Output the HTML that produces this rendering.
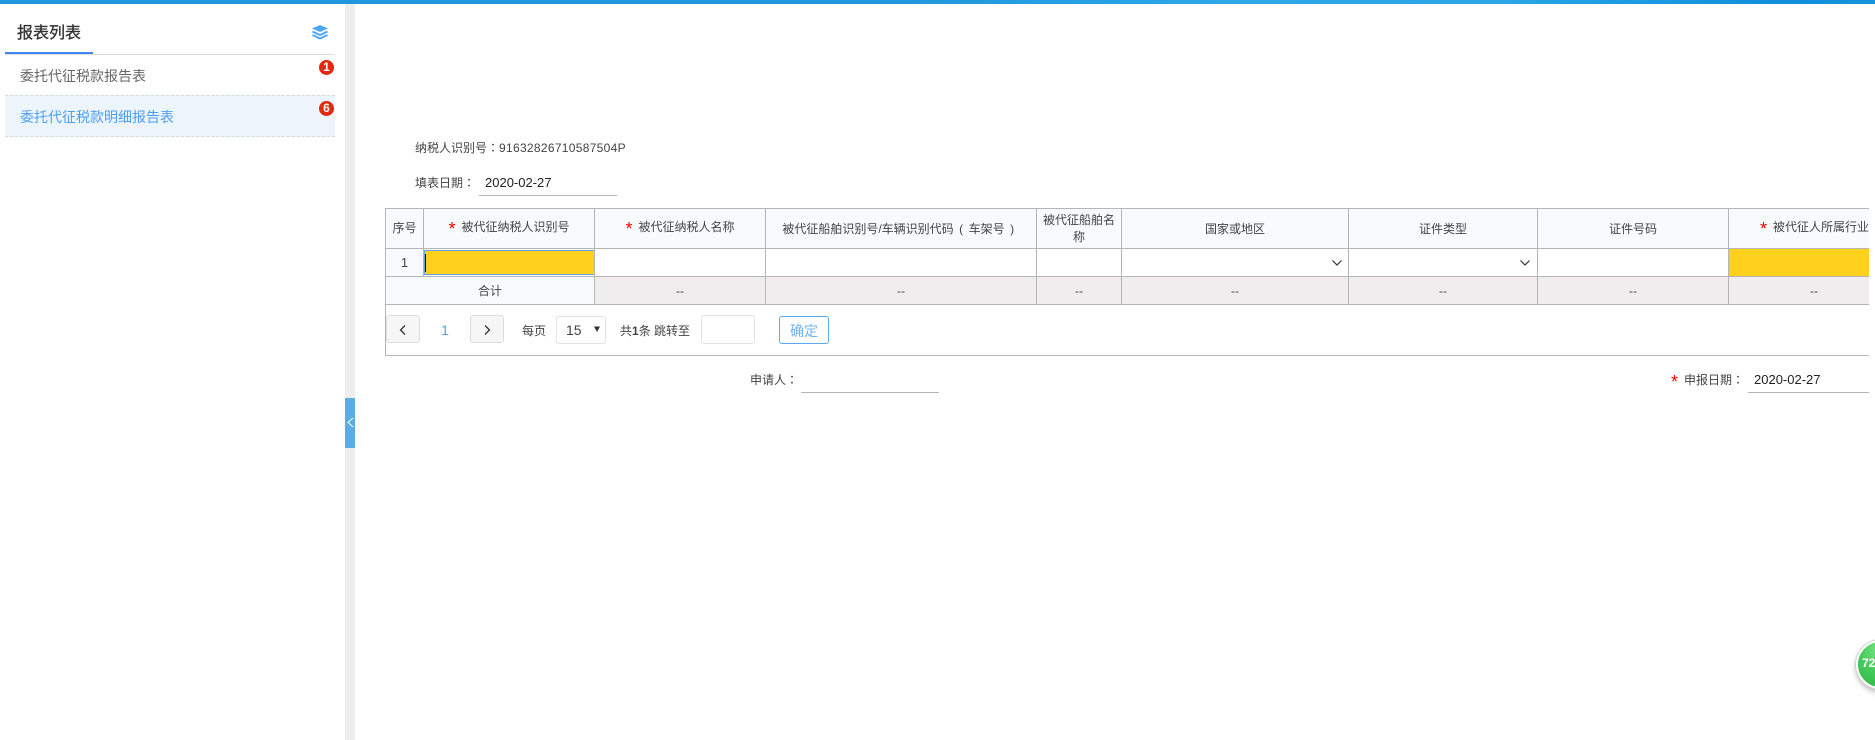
<!DOCTYPE html>
<html><head><meta charset="utf-8"><style>
html,body{margin:0;padding:0;background:#fff}
body{width:1875px;height:740px;overflow:hidden;position:relative;font-family:"Liberation Sans","Noto Sans CJK SC",sans-serif;font-size:12px;color:#444}
.a{position:absolute;white-space:nowrap}
.c{position:absolute;text-align:center;white-space:nowrap}
.l{position:absolute;background:#b5b5b5}
.s{color:#f00;font-size:18px;line-height:0;margin-right:6px;position:relative;top:4px}
.t{font-family:"Liberation Sans","Noto Sans CJK TC",sans-serif}
.p{display:inline-block;width:15px;text-align:center}
</style></head><body>
<div class="a" style="left:0;top:0;width:1875px;height:4px;background:linear-gradient(90deg,#2196de 0,#2196de 48%,#2aa8e8 65%,#28a6e8 80%,#0f8fdc 95%,#1493de 100%)"></div>

<div class="a" style="left:17px;top:23px;font-size:16px;line-height:22px;color:#333;-webkit-text-stroke:.35px #333">报表列表</div>
<svg class="a" style="left:311px;top:24px" width="18" height="17" viewBox="0 0 18 17"><path d="M9 1L17 4.5L9 8L1 4.5Z" fill="#4fa6f6"/><path d="M1.5 7.5L9 11L16.5 7.5" fill="none" stroke="#4fa6f6" stroke-width="2"/><path d="M1.5 11L9 14.5L16.5 11" fill="none" stroke="#4fa6f6" stroke-width="2"/></svg>
<div class="a" style="left:5px;top:54px;width:330px;height:1px;background:#dcdcdc"></div>
<div class="a" style="left:5px;top:52px;width:88px;height:2px;background:#4088f0"></div>
<div class="a" style="left:20px;top:66px;font-size:14px;line-height:20px;color:#666">委托代征税款报告表</div>
<div class="a" style="left:5px;top:95px;width:330px;height:40px;background:#ecf4fc;border-top:1px dashed #d5d8dc;border-bottom:1px dashed #d5d8dc"></div>
<div class="a" style="left:20px;top:107px;font-size:14px;line-height:20px;color:#4d9ff0">委托代征税款明细报告表</div>
<div class="c" style="left:319px;top:60px;width:15px;height:15px;border-radius:50%;background:#e2290f;color:#fff;font-weight:bold;line-height:15px;font-size:12px">1</div>
<div class="c" style="left:319px;top:101px;width:15px;height:15px;border-radius:50%;background:#e2290f;color:#fff;font-weight:bold;line-height:15px;font-size:12px">6</div>

<div class="a" style="left:345px;top:4px;width:10px;height:736px;background:#eee"></div>
<div class="a" style="left:345px;top:398px;width:10px;height:50px;background:#5dade2"></div>
<svg class="a" style="left:347px;top:415px" width="8" height="16" viewBox="0 0 8 16"><path d="M6 3L1 7.5L6 12" fill="none" stroke="#fff" stroke-width="1"/></svg>

<div class="a" style="left:415px;top:140px;line-height:16px">纳税人识别号<span class="t">：</span><span style="letter-spacing:.3px">91632826710587504P</span></div>
<div class="a" style="left:415px;top:175px;line-height:16px">填表日期<span class="t">：</span></div>
<div class="a" style="left:485px;top:175px;line-height:16px;font-size:13px;color:#222">2020-02-27</div>
<div class="a" style="left:479px;top:195px;width:138px;height:1px;background:#b5b5b5"></div>

<!-- table backgrounds -->
<div class="a" style="left:385px;top:208px;width:1484px;height:40px;background:#f7fbfc"></div>
<div class="a" style="left:385px;top:248px;width:38px;height:28px;background:#f7fbfc"></div>
<div class="a" style="left:385px;top:276px;width:209px;height:28px;background:#f7fbfc"></div>
<div class="a" style="left:594px;top:276px;width:1275px;height:28px;background:#f0edee"></div>
<div class="a" style="left:1728px;top:248px;width:141px;height:28px;background:#ffd01c"></div>
<div class="a" style="left:424px;top:250px;width:169px;height:23px;background:#ffd01c;border:1px solid #5ea6e6"></div>
<div class="a" style="left:425px;top:254px;width:1px;height:18px;background:#111"></div>

<!-- lines -->
<div class="l" style="left:385px;top:208px;width:1484px;height:1px"></div>
<div class="l" style="left:385px;top:248px;width:1484px;height:1px"></div>
<div class="l" style="left:385px;top:276px;width:1484px;height:1px"></div>
<div class="l" style="left:385px;top:304px;width:1484px;height:1px"></div>
<div class="l" style="left:385px;top:355px;width:1484px;height:1px"></div>
<div class="l" style="left:385px;top:208px;width:1px;height:148px"></div>
<div class="l" style="left:423px;top:208px;width:1px;height:68px"></div>
<div class="l" style="left:594px;top:208px;width:1px;height:96px"></div>
<div class="l" style="left:765px;top:208px;width:1px;height:96px"></div>
<div class="l" style="left:1036px;top:208px;width:1px;height:96px"></div>
<div class="l" style="left:1121px;top:208px;width:1px;height:96px"></div>
<div class="l" style="left:1348px;top:208px;width:1px;height:96px"></div>
<div class="l" style="left:1537px;top:208px;width:1px;height:96px"></div>
<div class="l" style="left:1728px;top:208px;width:1px;height:96px"></div>

<!-- header text -->
<div class="c" style="left:386px;top:220px;width:37px;line-height:16px">序号</div>
<div class="c" style="left:424px;top:219px;width:170px;line-height:16px"><span class="s">*</span>被代征纳税人识别号</div>
<div class="c" style="left:595px;top:219px;width:170px;line-height:16px"><span class="s">*</span>被代征纳税人名称</div>
<div class="c" style="left:766px;top:221px;width:270px;line-height:16px">被代征船舶识别号/车辆识别代码<span class="p">(</span>车架号<span class="p">)</span></div>
<div class="c" style="left:1043px;top:212px;width:72px;line-height:17px;white-space:normal">被代征船舶名称</div>
<div class="c" style="left:1122px;top:221px;width:226px;line-height:16px">国家或地区</div>
<div class="c" style="left:1349px;top:221px;width:188px;line-height:16px">证件类型</div>
<div class="c" style="left:1538px;top:221px;width:190px;line-height:16px">证件号码</div>
<div class="a" style="left:1760px;top:219px;width:109px;overflow:hidden;line-height:16px"><span class="s">*</span>被代征人所属行业</div>

<!-- body -->
<div class="c" style="left:386px;top:255px;width:37px;line-height:16px;font-size:13px">1</div>
<svg class="a" style="left:1331px;top:259px" width="12" height="8" viewBox="0 0 12 8"><path d="M1.5 1.5L6 6L10.5 1.5" fill="none" stroke="#333" stroke-width="1.2"/></svg>
<svg class="a" style="left:1519px;top:259px" width="12" height="8" viewBox="0 0 12 8"><path d="M1.5 1.5L6 6L10.5 1.5" fill="none" stroke="#333" stroke-width="1.2"/></svg>

<!-- sum -->
<div class="c" style="left:386px;top:283px;width:208px;line-height:16px">合计</div>
<div class="c" style="left:595px;top:283px;width:170px;line-height:16px">--</div>
<div class="c" style="left:766px;top:283px;width:270px;line-height:16px">--</div>
<div class="c" style="left:1037px;top:283px;width:84px;line-height:16px">--</div>
<div class="c" style="left:1122px;top:283px;width:226px;line-height:16px">--</div>
<div class="c" style="left:1349px;top:283px;width:188px;line-height:16px">--</div>
<div class="c" style="left:1538px;top:283px;width:190px;line-height:16px">--</div>
<div class="c" style="left:1729px;top:283px;width:170px;line-height:16px">--</div>
<div class="a" style="left:1869px;top:200px;width:6px;height:170px;background:#fff"></div>

<!-- pager -->
<div class="a" style="left:386px;top:315px;width:32px;height:26px;background:#f6f6f6;border:1px solid #ddd;border-radius:3px"></div>
<svg class="a" style="left:398px;top:324px" width="10" height="12" viewBox="0 0 10 12"><path d="M7 1.5L2.5 6L7 10.5" fill="none" stroke="#333" stroke-width="1.3"/></svg>
<div class="c" style="left:435px;top:321px;width:20px;line-height:18px;font-size:14px;color:#4da3f5">1</div>
<div class="a" style="left:470px;top:315px;width:32px;height:26px;background:#f6f6f6;border:1px solid #ddd;border-radius:3px"></div>
<svg class="a" style="left:482px;top:324px" width="10" height="12" viewBox="0 0 10 12"><path d="M3 1.5L7.5 6L3 10.5" fill="none" stroke="#333" stroke-width="1.3"/></svg>
<div class="a" style="left:522px;top:323px;line-height:16px">每页</div>
<div class="a" style="left:556px;top:316px;width:48px;height:26px;border:1px solid #e3e3e3;border-radius:3px"></div>
<div class="a" style="left:566px;top:321px;line-height:18px;font-size:14px">15</div>
<svg class="a" style="left:593px;top:326px" width="8" height="7" viewBox="0 0 8 7"><path d="M1 0.5H7L4 6Z" fill="#333"/></svg>
<div class="a" style="left:620px;top:323px;line-height:16px">共<b>1</b>条 跳转至</div>
<div class="a" style="left:701px;top:315px;width:52px;height:27px;border:1px solid #e3e3e3;border-radius:3px"></div>
<div class="c" style="left:779px;top:316px;width:48px;height:26px;border:1px solid #5aaaf0;border-radius:3px;line-height:29px;font-size:14px;color:#6fb4f2">确定</div>

<!-- footer -->
<div class="a" style="left:750px;top:372px;line-height:16px">申请人<span class="t">：</span></div>
<div class="a" style="left:801px;top:392px;width:138px;height:1px;background:#b5b5b5"></div>
<div class="a" style="left:1671px;top:372px;line-height:16px"><span class="s">*</span>申报日期<span class="t">：</span></div>
<div class="a" style="left:1754px;top:372px;line-height:16px;font-size:13px;color:#222">2020-02-27</div>
<div class="a" style="left:1748px;top:392px;width:121px;height:1px;background:#b5b5b5"></div>

<!-- ball -->
<div class="a" style="left:1856px;top:640px;width:45px;height:45px;border-radius:50%;background:radial-gradient(circle at 50% 20%,#7ee588,#48cc5e 45%,#2fb548);border:2px solid #fff;box-shadow:0 0 0 1px #cfcfcf,0 3px 6px rgba(0,0,0,.3)"></div>
<div class="a" style="left:1862px;top:655px;color:#fff;font-weight:bold;font-size:12px;line-height:16px">72</div>
</body></html>
